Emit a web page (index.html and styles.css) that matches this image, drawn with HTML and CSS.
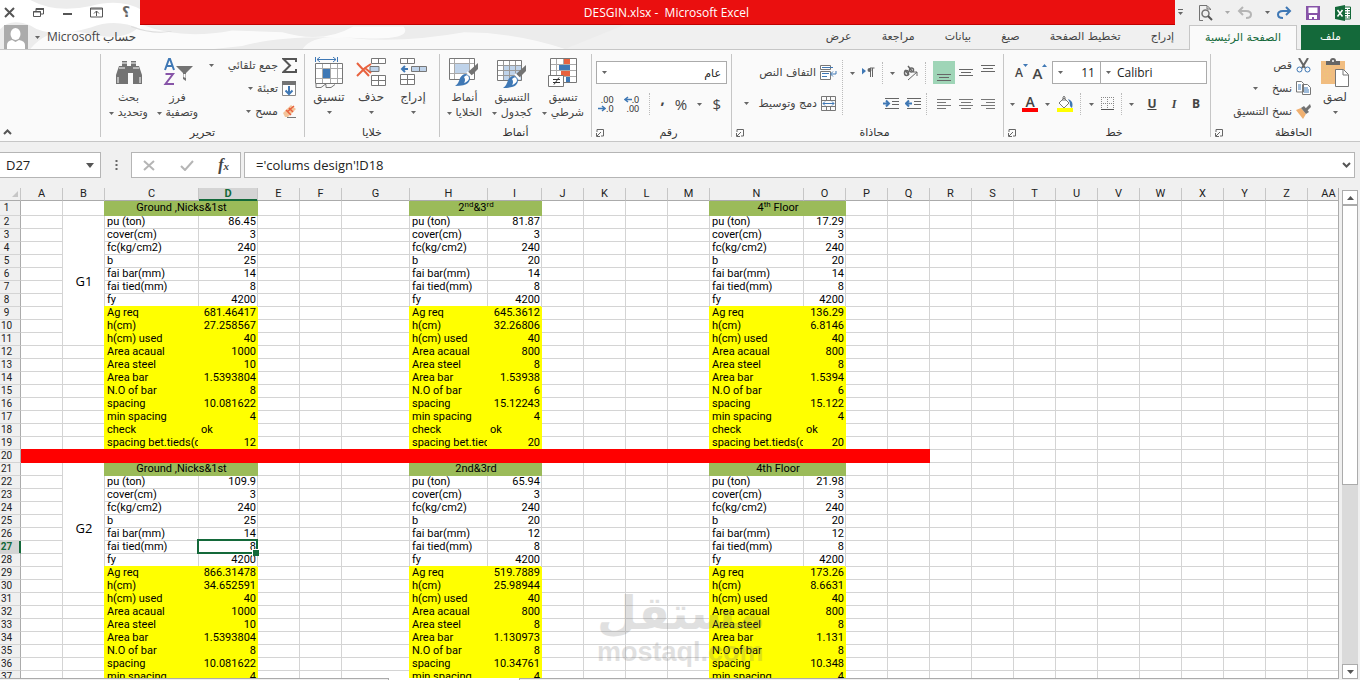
FILE: index.html
```html
<!DOCTYPE html>
<html lang="ar">
<head>
<meta charset="utf-8">
<meta name="viewport" content="width=device-width, initial-scale=1">
<title>DESGIN.xlsx - Microsoft Excel</title>
<link rel="stylesheet" href="styles.css">
</head>
<body>
<svg class="defs" aria-hidden="true">
  <symbol id="caret" viewBox="0 0 5 3"><path d="M0 0h5L2.500 3z" fill="#666"/></symbol>
  <symbol id="launch" viewBox="0 0 8 8"><path d="M1 3V.5h6.500V7H5M5 3 1 7M.5 4v3.500H4" fill="none" stroke="#666"/></symbol>
  <symbol id="brush" viewBox="0 0 24 24"><path d="M23 0v6l-7 7-4-3z" fill="#737373"/><path d="m12 9 5 5" stroke="#fff" stroke-width="2"/><path d="M5 15q4-6 8-3 4 3 0 8-3 3-13 3 4-3 5-8z" fill="#3f78b5"/><path d="M9 14q4-4 5 1 0 3-5 5 2-3 0-6z" fill="#fff"/></symbol>
</svg>
<div class="app">
  <header class="top">
    <svg class="clouds" viewBox="0 0 620 50" preserveAspectRatio="none" aria-hidden="true">
      <path d="M0 0H140V25H620L560 50H0z" fill="#ececec"/>
      <path d="M0 0h30q25 14 60 6 30-8 50 4v20q-25-12-50-2-40 12-60-2Q10 18 0 30z" fill="#fff"/>
      <path d="M30 50q20-25 55-16 40 10 55-9 40 16 90 6l50 2q40 12 70-6h50q10 14-40 12-80-4-120 8-80 10-155 3z" fill="#fff" opacity=".8"/>
      <path d="M300 50q10-16 50-11 50 5 110-6 50 0 100 17z" fill="#fff" opacity=".7"/>
      <path d="M130 27q20 8 40 5" fill="none" stroke="#ddd"/>
    </svg>
    <div class="titlebar">
      <div class="winbtns">
        <button aria-label="إغلاق"><svg width="11" height="11" viewBox="0 0 11 11"><path d="m1 1 9 9M10 1l-9 9" stroke="#555" stroke-width="2"/></svg></button>
        <button aria-label="استعادة"><svg width="11" height="11" viewBox="0 0 11 11" fill="none" stroke="#555"><path d="M3 4V1.500h7.500V7H8"/><path d="M3 2h8" stroke-width="2"/><path d="M.5 4.500h7v5h-7zM0 5h8"/></svg></button>
        <button aria-label="تصغير"><svg width="11" height="11" viewBox="0 0 11 11"><path d="M1 7h9" stroke="#555" stroke-width="2"/></svg></button>
        <button aria-label="خيارات عرض الشريط"><svg width="13" height="11" viewBox="0 0 13 11" fill="none" stroke="#555"><path d="M.5 1h12v9H.5zM0 2h13M6.500 9V4M4 6.500 6.500 4 9 6.500"/></svg></button>
        <button aria-label="تعليمات" class="help">؟</button>
      </div>
      <h1 class="title">DESGIN.xlsx -&nbsp; Microsoft Excel</h1>
      <div class="quick">
        <button class="q1" aria-label="تخصيص"><svg width="5" height="7" viewBox="0 0 5 7"><path d="M0 .5h5" stroke="#666"/><path d="M0 3h5L2.500 6z" fill="#666"/></svg></button>
        <button class="q2" aria-label="معاينة قبل الطباعة"><svg width="15" height="16" viewBox="0 0 15 16" fill="none" stroke="#737373"><path d="M12.500 5V4L9 .5H1.500v15H5M9 1v3h3"/><circle cx="7.500" cy="8.500" r="3.500" stroke-width="1.500"/><path d="m10 11 4 4" stroke="#555" stroke-width="2"/></svg></button>
        <button class="q3" aria-label="قائمة التراجع"><svg class="caret faint"><use href="#caret"/></svg></button>
        <button class="q4" aria-label="تراجع"><svg width="15" height="13" viewBox="0 0 15 13" fill="none" stroke="#b5b5b5" stroke-width="2"><path d="M6 1 2 5l4 4M2 5h7q5 0 5 3.500T9 12"/></svg></button>
        <button class="q5" aria-label="قائمة الإعادة"><svg class="caret"><use href="#caret"/></svg></button>
        <button class="q6" aria-label="إعادة"><svg width="15" height="13" viewBox="0 0 15 13" fill="none" stroke="#3f78b5" stroke-width="2"><path d="m9 1 4 4-4 4M13 5H6Q1 5 1 8.500T6 12"/></svg></button>
        <button class="q7" aria-label="حفظ"><svg width="14" height="14" viewBox="0 0 14 14"><path d="M0 0h14v14H0z" fill="#8754a8"/><path d="M2.500 1.500h9V7h-9zM3 9h8v4H8v-2H6v2H3z" fill="#fff"/></svg></button>
        <span class="q8"><svg width="16" height="16" viewBox="0 0 16 16"><path d="M9 2h6.500v12H9" fill="#fff" stroke="#14693a"/><path d="M10 4.500h2m1 0h2M10 7h2m1 0h2m-5 2.500h2m1 0h2M10 12h2m1 0h2" stroke="#14693a"/><path d="m0 2 10-2v16L0 14z" fill="#14693a"/><path d="m2.500 5 5 6.500M7.500 5l-5 6.500" stroke="#fff" stroke-width="1.500"/></svg></span>
      </div>
    </div>
    <div class="tabrow">
      <button class="account"><svg width="24" height="24" viewBox="0 0 24 24"><path d="M0 0h24v24H0z" fill="#ababab"/><ellipse cx="11.500" cy="9" rx="5" ry="6" fill="#fff"/><path d="M3 24v-4q0-4 5-5l3.500 2 3.500-2q6 1 6 5v4z" fill="#fff"/></svg><svg class="caret"><use href="#caret"/></svg><span dir="ltr">Microsoft حساب</span></button>
      <nav class="tabs">
        <a href="#view">عرض</a><a href="#review">مراجعة</a><a href="#data">بيانات</a><a href="#formulas">صيغ</a><a href="#layout">تخطيط الصفحة</a><a href="#insert">إدراج</a><a href="#home" class="active">الصفحة الرئيسية</a><a href="#file" class="file">ملف</a>
      </nav>
    </div>
  </header>

  <section class="ribbon">
    <div class="spacer"><button aria-label="طي الشريط"><svg width="9" height="6" viewBox="0 0 9 6"><path d="m1 5 3.500-3.500L8 5" fill="none" stroke="#555" stroke-width="2"/></svg></button></div>

    <div class="group g-edit">
      <div class="body">
        <button class="big"><svg width="28" height="32" viewBox="0 0 28 32"><path d="M4 9h3V4h5v5h4V4h5v5h3l3 9v9h-9V16h-5v11H1v-9z" fill="#737373"/><path d="M7 6h5M16 6h5M4 11h6m8 0h6M3 20v6m22-6v6" stroke="#fff"/></svg><span>بحث</span><span>وتحديد <svg class="caret"><use href="#caret"/></svg></span></button>
        <button class="big"><svg width="30" height="32" viewBox="0 0 30 32" fill="none"><path d="m2 13 4-11h1l4 11M3.500 9h6" stroke="#3f78b5" stroke-width="2"/><path d="M2.500 17H10L2.500 27H11" stroke="#8754a8" stroke-width="2"/><path d="M13 9h17l-7 7v8l-3-2v-6z" fill="#737373"/><path d="M20.500 17h2v4l-2-1z" fill="#fff"/></svg><span>فرز</span><span>وتصفية <svg class="caret"><use href="#caret"/></svg></span></button>
        <div class="smalls">
          <button><svg width="15" height="15" viewBox="0 0 15 15"><path d="M14 4V1H1.500L8 7.500 1.500 14H14v-3" fill="none" stroke="#555" stroke-width="2"/></svg>جمع تلقائي<svg class="caret far"><use href="#caret"/></svg></button>
          <button><svg width="15" height="15" viewBox="0 0 15 15"><path d="M.5.5h13v14H.5z" fill="#fff" stroke="#888"/><path d="M0 0h14v4H0z" fill="#737373"/><path d="M7 5v8M3.500 9.500 7 13l3.500-3.500" fill="none" stroke="#3f78b5" stroke-width="2"/></svg>تعبئة<svg class="caret"><use href="#caret"/></svg></button>
          <button><svg width="15" height="15" viewBox="0 0 15 15"><path d="m1 9 8-8 5 4-8 8H3z" fill="#f3c49a"/><path d="m4 6 5 5M7 4l4 4M5 8l7-6" stroke="#e8623f" stroke-width="1.500"/><path d="M5 13.500h9" stroke="#777"/></svg>مسح<svg class="caret"><use href="#caret"/></svg></button>
        </div>
      </div>
      <div class="label">تحرير</div>
    </div>

    <div class="group g-cells">
      <div class="body">
        <button class="big"><svg width="28" height="32" viewBox="0 0 28 32" fill="none"><path d="M.5 0v5M22.500 0v5M2 2.500h19M5 0 2 2.500 5 5M18 0l3 2.500L18 5" stroke="#3f78b5"/><path d="M.5 6.500h27v20H.5z" fill="#fff" stroke="#777"/><path d="M7.500 7v19m8-19v19m7-19v19M1 11.500h26m-26 10h26" stroke="#aaa"/><path d="M8 12h7v9H8z" fill="#3f78b5"/><path d="M1 27v3.500h5l4-3h1v3h5l4-3" stroke="#777"/></svg><span>تنسيق</span><svg class="caret"><use href="#caret"/></svg></button>
        <button class="big"><svg width="30" height="32" viewBox="0 0 30 32" fill="none"><g stroke="#777"><path d="M15.500 1.500h14v5h-14zm7 0v5" fill="#fff"/><path d="M14 9.500h9v5h-9z" fill="#bfd3ea"/><path d="M15.500 18.500h14v10h-14zm7 0v10m-7-5h14" fill="#fff"/></g><path d="m1 6 12 13M1 19l8-8 6-4m-6 4 6 5" stroke="#e8623f" stroke-width="2"/></svg><span>حذف</span><svg class="caret"><use href="#caret"/></svg></button>
        <button class="big"><svg width="28" height="32" viewBox="0 0 28 32" fill="none"><g stroke="#777"><path d="M1.500 1.500h14v5h-14zm7 0v5" fill="#fff"/><path d="M12.500 9.500h15v5h-15zm8 0v5" fill="#bfd3ea"/><path d="M1.500 17.500h14v10h-14zm7 0v10m-7-5h14" fill="#fff"/></g><path d="M9 12H3m3-3-3 3 3 3" stroke="#3f78b5" stroke-width="2"/></svg><span>إدراج</span><svg class="caret"><use href="#caret"/></svg></button>
      </div>
      <div class="label">خلايا</div>
    </div>

    <div class="group g-styles">
      <div class="body">
        <button class="big"><svg width="30" height="32" viewBox="0 0 30 32" fill="none"><path d="M.5 1.500h25v21H.5z" fill="#fff" stroke="#777"/><path d="M5.500 2v20m15-20v20M1 6.500h24m-24 10h24" stroke="#aaa"/><path d="M6 7h14v9H6z" fill="#bfd3ea"/><use href="#brush" x="6" y="6" width="24" height="24"/></svg><span>أنماط</span><span>الخلايا <svg class="caret"><use href="#caret"/></svg></span></button>
        <button class="big"><svg width="30" height="32" viewBox="0 0 30 32" fill="none"><path d="M.5 3.500h24v20H.5z" fill="#fff" stroke="#777"/><path d="M7 9h17v14H7z" fill="#bfd3ea"/><path d="M6.500 4v19m6-19v19m6-19v19M1 8.500h23m-23 5h23m-23 5h23" stroke="#999"/><use href="#brush" x="6" y="8" width="24" height="24"/></svg><span>التنسيق</span><span>كجدول <svg class="caret"><use href="#caret"/></svg></span></button>
        <button class="big"><svg width="32" height="32" viewBox="0 0 32 32" fill="none"><path d="M3.500 1.500h26v24h-26z" fill="#fff" stroke="#777"/><path d="M9.500 2v23m7-23v23m6-23v23M4 7.500h25m-25 6h25m-25 6h25" stroke="#aaa"/><path d="M17 2h6v5h-6zm-3 12h9v5h-9z" fill="#e8623f"/><path d="M12 8h11v5H12zm7 12h4v5h-4z" fill="#3f78b5"/><path d="M1.500 18.500h15v11h-15z" fill="#fff" stroke="#777"/><path d="M6 22.500h7m-7 3h7m-1-5-5 7" stroke="#333"/></svg><span>تنسيق</span><span>شرطي <svg class="caret"><use href="#caret"/></svg></span></button>
      </div>
      <div class="label">أنماط</div>
    </div>

    <div class="group g-number">
      <div class="body rows">
        <div class="combo full"><svg class="caret"><use href="#caret"/></svg><select aria-label="تنسيق الأرقام" dir="rtl"><option>عام</option></select></div>
        <div class="line">
          <button class="dec" aria-label="إنقاص المنازل العشرية"><span>.00</span><span><svg width="8" height="7" viewBox="0 0 8 7"><path d="M0 3.500h7M4 1l3 2.500L4 6" fill="none" stroke="#3f78b5" stroke-width="1.500"/></svg>.0</span></button>
          <button class="dec" aria-label="زيادة المنازل العشرية"><span><svg width="8" height="7" viewBox="0 0 8 7"><path d="M8 3.500H1M4 1 1 3.500 4 6" fill="none" stroke="#3f78b5" stroke-width="1.500"/></svg>.0</span><span>.00</span></button>
          <i class="dots"></i>
          <button class="sym comma" aria-label="نمط الفاصلة">,</button>
          <button class="sym">%</button>
          <button aria-label="عملات"><svg class="caret"><use href="#caret"/></svg></button>
          <button class="sym">$</button>
        </div>
      </div>
      <div class="label">رقم</div>
      <button class="launcher" aria-label="خيارات الأرقام"><svg width="8" height="8"><use href="#launch"/></svg></button>
    </div>

    <div class="group g-align">
      <div class="body">
        <div class="wrapcol">
          <button><svg width="17" height="16" viewBox="0 0 17 16" fill="none"><path d="M.5.5h10v4H.5zm0 6h10v8H.5z" fill="#fff" stroke="#777"/><path d="M2 2.500h11M2 8.500h7m-7 3h5M16 6v3h-5m2-2.500L10.500 9l2.500 2.500" stroke="#3f78b5"/></svg>التفاف النص</button>
          <button><svg width="16" height="16" viewBox="0 0 16 16" fill="none"><path d="M.5.5h14v14H.5zM1 4.500h13m-13 6h13M5.500 0v4m4-4v4m-4 7v4m4-4v4" stroke="#777"/><path d="M2 7.500h11M4 5.500l-2 2 2 2m7-4 2 2-2 2" stroke="#3f78b5"/></svg>دمج وتوسيط<svg class="caret merge"><use href="#caret"/></svg></button>
        </div>
        <i class="dots tall"></i>
        <div class="rows aligns">
          <div class="line">
            <button aria-label="قائمة الاتجاه"><svg class="caret"><use href="#caret"/></svg></button>
            <button aria-label="اتجاه النص"><svg width="13" height="11" viewBox="0 0 13 11"><path d="m0 1 4 3-4 3.500z" fill="#3f78b5"/><path d="M8.500 1v9M10.500 1v9M12.500 1H8" stroke="#666" fill="none"/><circle cx="7.500" cy="3" r="2" fill="#666"/></svg></button>
            <i class="dots"></i>
            <button aria-label="قائمة التدوير"><svg class="caret"><use href="#caret"/></svg></button>
            <button aria-label="تدوير النص"><svg width="16" height="16" viewBox="0 0 16 16" fill="none" stroke="#666"><ellipse cx="4.500" cy="8" rx="2" ry="2.500" stroke-width="1.500"/><path d="m3 5 4 5M6 1l4 5" stroke-width="1.500"/><circle cx="9.500" cy="5" r="2" stroke-width="1.500"/><path d="M6 15 15 7m-4 0h4v4"/></svg></button>
            <i class="dots"></i>
            <div class="set">
              <button class="al on" aria-label="محاذاة للأسفل"><svg width="14" height="20" viewBox="0 0 14 20"><path d="M0 11.500h14m-12 3h10m-12 3h14" stroke="#666"/></svg></button>
              <button class="al" aria-label="محاذاة للوسط"><svg width="14" height="20" viewBox="0 0 14 20"><path d="M0 6.500h14m-12 3h10m-12 3h14" stroke="#666"/></svg></button>
              <button class="al" aria-label="محاذاة للأعلى"><svg width="14" height="20" viewBox="0 0 14 20"><path d="M0 2.500h14m-12 3h10m-12 3h14" stroke="#666"/></svg></button>
            </div>
          </div>
          <div class="line">
            <button aria-label="زيادة المسافة البادئة"><svg width="16" height="12" viewBox="0 0 16 12" fill="none"><path d="M2 .5h14M9 3.500h7m-7 3h7m-14 4h14" stroke="#666"/><path d="M0 5.500h6M3 2.500l3 3-3 3" stroke="#3f78b5" stroke-width="2"/></svg></button>
            <button aria-label="إنقاص المسافة البادئة"><svg width="16" height="12" viewBox="0 0 16 12" fill="none"><path d="M2 .5h14M9 3.500h7m-7 3h7m-14 4h14" stroke="#666"/><path d="M7 5.500H1M4 2.500l-3 3 3 3" stroke="#3f78b5" stroke-width="2"/></svg></button>
            <i class="dots"></i>
            <div class="set">
              <button class="al" aria-label="محاذاة لليسار"><svg width="14" height="12" viewBox="0 0 14 12"><path d="M0 1.500h14m-14 3h9m-9 3h14m-14 3h9" stroke="#777"/></svg></button>
              <button class="al" aria-label="توسيط"><svg width="14" height="12" viewBox="0 0 14 12"><path d="M0 1.500h14m-12 3h10m-12 3h14m-12 3h10" stroke="#777"/></svg></button>
              <button class="al" aria-label="محاذاة لليمين"><svg width="14" height="12" viewBox="0 0 14 12"><path d="M0 1.500h14m-9 3h9m-14 3h14m-9 3h9" stroke="#777"/></svg></button>
            </div>
          </div>
        </div>
      </div>
      <div class="label">محاذاة</div>
      <button class="launcher" aria-label="خيارات المحاذاة"><svg width="8" height="8"><use href="#launch"/></svg></button>
    </div>

    <div class="group g-font">
      <div class="body rows">
        <div class="line">
          <button class="fa small" aria-label="تصغير الخط">A<svg width="5" height="3" viewBox="0 0 5 3"><path d="M0 0h5L2.500 3z" fill="#3f78b5"/></svg></button>
          <button class="fa" aria-label="تكبير الخط">A<svg width="5" height="3" viewBox="0 0 5 3"><path d="M0 3h5L2.500 0z" fill="#3f78b5"/></svg></button>
          <div class="combos">
            <div class="combo size"><svg class="caret"><use href="#caret"/></svg><select aria-label="حجم الخط"><option>11</option></select></div>
            <div class="combo name"><svg class="caret"><use href="#caret"/></svg><select aria-label="الخط"><option>Calibri</option></select></div>
          </div>
        </div>
        <div class="line">
          <button aria-label="ألوان الخط"><svg class="caret"><use href="#caret"/></svg></button>
          <button class="color" aria-label="لون الخط">A</button>
          <button aria-label="ألوان التعبئة"><svg class="caret"><use href="#caret"/></svg></button>
          <button aria-label="لون التعبئة"><svg width="16" height="16" viewBox="0 0 16 16" fill="none"><path d="m2 7 5-5 5 5-5 5z" fill="#fff" stroke="#777"/><path d="M6 5V1q1-1.500 2 0v4" stroke="#777"/><path d="M11 3q6 2 4 9-3-2-2-5z" fill="#3f78b5"/><path d="M0 12h16v4H0z" fill="#ff0"/></svg></button>
          <i class="dots"></i>
          <button aria-label="قائمة الحدود"><svg class="caret"><use href="#caret"/></svg></button>
          <button aria-label="حدود"><svg width="13" height="13" viewBox="0 0 13 13"><path d="M.5 0v12M12.500 0v12M6.500 0v12M0 .5h13M0 6.500h13" stroke="#888" stroke-dasharray="1 1"/><path d="M0 12.500h13" stroke="#555"/></svg></button>
          <i class="dots"></i>
          <button aria-label="أنماط التسطير"><svg class="caret"><use href="#caret"/></svg></button>
          <div class="set">
            <button class="fmt u">U</button>
            <button class="fmt i">I</button>
            <button class="fmt">B</button>
          </div>
        </div>
      </div>
      <div class="label">خط</div>
      <button class="launcher" aria-label="خيارات الخط"><svg width="8" height="8"><use href="#launch"/></svg></button>
    </div>

    <div class="group g-clip">
      <div class="body">
        <div class="smalls">
          <button><svg width="15" height="15" viewBox="0 0 15 15" fill="none"><path d="m3 0 6 10M12 0 6 10" stroke="#666" stroke-width="2"/><circle cx="3.500" cy="11.500" r="2.500" stroke="#3f78b5"/><circle cx="11.500" cy="11.500" r="2.500" stroke="#3f78b5"/></svg>قص</button>
          <button><svg width="15" height="15" viewBox="0 0 15 15"><path d="M.5.5h5l2 2V11h-7zM6.500 3.500h5l3 3v7h-8z" fill="#fff" stroke="#777"/><path d="M2 4h3M2 6h3M2 8h3m3-1h4M8 9h5m-5 2h5" stroke="#3f78b5"/></svg>نسخ<svg class="caret far"><use href="#caret"/></svg></button>
          <button><svg width="15" height="15" viewBox="0 0 15 15"><path d="m0 6 5-2 5 6-3 5z" fill="#f0b070"/><path d="m5 4 3-2 5 6-3 2z" fill="#737373"/><path d="m9 5 5-5 1 3-4 4z" fill="#737373"/></svg>نسخ التنسيق</button>
        </div>
        <button class="big paste"><svg width="28" height="32" viewBox="0 0 28 32"><path d="M0 4h24v23H0z" fill="#f1bd80"/><path d="M3 9h9m-9 4h9m-9 4h9m-9 4h9" stroke="#e8d070" stroke-dasharray="1 2"/><path d="M5 8V4h4q0-3 3-3t3 3h4v4z" fill="#666"/><circle cx="12" cy="4" r="1" fill="#fff"/><path d="M14.500 12.500h8l5 5v12h-13z" fill="#fff" stroke="#777"/><path d="M22 13v5h5" fill="none" stroke="#777"/></svg><span>لصق</span><svg class="caret"><use href="#caret"/></svg></button>
      </div>
      <div class="label">الحافظة</div>
      <button class="launcher" aria-label="خيارات الحافظة"><svg width="8" height="8"><use href="#launch"/></svg></button>
    </div>
  </section>

  <section class="formula" dir="ltr">
    <div class="namebox"><input aria-label="مربع الاسم" value="D27"><svg width="8" height="5" viewBox="0 0 8 5"><path d="M0 0h8L4 5z" fill="#555"/></svg></div>
    <svg width="3" height="11" viewBox="0 0 3 11"><path d="M.5 0h2v2h-2zm0 4h2v2h-2zm0 4h2v2h-2z" fill="#666"/></svg>
    <div class="fxbox">
      <button aria-label="إلغاء"><svg width="12" height="11" viewBox="0 0 12 11"><path d="m1 1 10 9M11 1 1 10" stroke="#b5b5b5" stroke-width="2"/></svg></button>
      <button aria-label="إدخال"><svg width="14" height="11" viewBox="0 0 14 11"><path d="m1 6 4 4 8-9" fill="none" stroke="#b5b5b5" stroke-width="2"/></svg></button>
      <button class="fx"><i>f</i>x</button>
    </div>
    <div class="fbar"><input aria-label="شريط الصيغة" value="='colums design'!D18"><svg width="9" height="6" viewBox="0 0 9 6"><path d="m1 1 3.500 3.500L8 1" fill="none" stroke="#555" stroke-width="2"/></svg></div>
  </section>

  <main class="work">
    <div class="sheetwrap">
      <div class="sheet"><table id="grid" class="grid"></table></div>
      <div class="mark" aria-hidden="true"><span class="mark-ar">مستقل</span><span class="mark-en">mostaql.com</span></div>
      <div class="foot"><i class="foot-a"></i><i class="foot-tab"></i><i class="foot-b"></i></div>
    </div>
    <div class="scroll">
      <button aria-label="لأعلى"><svg width="7" height="4" viewBox="0 0 7 4"><path d="M0 4h7L3.500 0z" fill="#555"/></svg></button>
      <div class="track"><div class="thumb"></div></div>
      <button aria-label="لأسفل"><svg width="7" height="4" viewBox="0 0 7 4"><path d="M0 0h7L3.500 4z" fill="#555"/></svg></button>
    </div>
  </main>
</div>
<script src="grid.js"></script>
</body>
</html>
```
FILE: styles.css
```css
* { box-sizing: border-box; }
body { margin: 0; background: #f0f0f0; color: #444; font: 11px/15px "DejaVu Sans", sans-serif; }
button { margin: 0; padding: 0; border: 0; background: none; color: inherit; font: inherit; }
select, input { min-width: 0; margin: 0; padding: 0; border: 0; background: none; color: #222; font: 12px/20px "Open Sans", "DejaVu Sans", sans-serif; appearance: none; outline: 0; }
svg { display: block; flex: none; }
.defs { position: absolute; width: 0; height: 0; }
.caret { display: inline-block; width: 5px; height: 3px; vertical-align: middle; }
.faint { opacity: .5; }
.app { display: flex; flex-direction: column; height: 100vh; overflow: hidden; }

.top { position: relative; border-bottom: 1px solid #c6c6c6; }
.clouds { position: absolute; left: 0; top: 0; width: 46%; height: 100%; }
.titlebar { position: relative; display: flex; height: 25px; }
.winbtns { display: flex; width: 140px; padding-left: 3px; gap: 17px; align-items: center; }
.winbtns button { display: grid; place-items: center; min-width: 12px; height: 22px; }
.winbtns .help { font-weight: bold; font-size: 14px; color: #666; }
.title { flex: 1; margin: 0; padding-left: 18px; background: #ea0f0f; border-bottom: 1px solid #c00000; color: #fff; font: 12px/25px "Open Sans", sans-serif; text-align: center; }
.quick { display: flex; align-items: center; width: 185px; }
.quick > * { display: grid; place-items: center; height: 22px; }
.q1 { width: 11px; } .q2 { width: 38px; } .q3 { width: 7px; } .q4 { width: 26px; } .q5 { width: 20px; } .q6 { width: 14px; } .q7 { width: 44px; } .q8 { width: 14px; }

.tabrow { position: relative; display: flex; justify-content: space-between; height: 24px; }
.account { display: flex; align-items: center; gap: 7px; padding-left: 4px; font: 12px/24px "Open Sans", "DejaVu Sans", sans-serif; }
.tabs { display: flex; }
.tabs a { padding: 0 15px; color: #444; text-decoration: none; line-height: 24px; }
.tabs .active { height: 25px; margin-right: 4px; border: 1px solid #c6c6c6; border-bottom: 0; background: #fafafa; color: #14693a; }
.tabs .file { width: 59px; padding: 0; height: 25px; background: #14693a; color: #fff; text-align: center; }

.ribbon { display: flex; height: 92px; padding: 4px 0; background: #fafafa; border-bottom: 1px solid #c6c6c6; }
.spacer { display: flex; flex: 1; align-items: flex-end; padding: 0 0 2px 3px; }
.group { position: relative; display: flex; flex-direction: column; border-left: 1px solid #c6c6c6; }
.body { display: flex; flex: 1; }
.label { margin-bottom: -2px; line-height: 12px; color: #333; text-align: center; }
.launcher { position: absolute; left: 4px; bottom: 0; }
.big { display: flex; flex-direction: column; align-items: center; padding-top: 3px; font-size: 12px; white-space: nowrap; }
.big > svg:first-child { margin-bottom: 1px; }
.big > span { direction: rtl; }
.big > .caret { margin-top: 6px; }
.smalls { display: flex; flex-direction: column; flex: 1; direction: rtl; }
.smalls button, .wrapcol button { display: flex; align-items: center; gap: 4px; height: 23px; white-space: nowrap; }
.far { margin-right: 10px; }
.g-edit { width: 204px; }
.g-edit .body { padding: 0 7px 0 3px; }
.g-edit .big { width: 49px; }
.g-edit .big, .g-styles .big { font-size: 11px; }
.g-cells { width: 135px; }
.g-cells .body { padding-left: 3px; }
.g-cells .big { width: 42px; }
.g-styles { width: 152px; }
.g-styles .body { justify-content: space-between; padding: 0 7px; }
.g-number { width: 140px; }
.g-number .label { padding-left: 14px; }
.g-align { width: 272px; }
.g-align .label { padding-left: 14px; }
.g-font { width: 207px; }
.g-font .label { padding-left: 14px; }
.g-clip { width: 150px; }
.g-clip .label { padding-left: 16px; }
.g-clip .body { padding-right: 5px; }
.paste { width: 40px; margin-left: 4px; }

.rows { display: flex; flex-direction: column; gap: 8px; }
.body.rows { padding: 7px 4px 0; }
.line { display: flex; align-items: center; justify-content: space-between; height: 23px; }
.dots { width: 0; height: 22px; border-left: 1px dotted #bbb; }
.combo { display: flex; align-items: center; height: 23px; padding: 0 5px; border: 1px solid #ababab; background: #fff; }
.combo select { flex: 1; padding-left: 6px; }
.full select { font-size: 11px; }
.combos, .set { display: flex; }
.size { width: 48px; border-right: 0; }
.size select { text-align-last: right; }
.name { width: 107px; }
.dec { display: flex; flex-direction: column; align-items: flex-end; font: 9px/9px "Noto Sans", sans-serif; color: #333; }
.dec span { display: flex; align-items: center; }
.sym { font: 15px/22px "Open Sans", sans-serif; }
.comma { align-self: flex-start; font-weight: bold; line-height: 12px; }
.g-number .line { padding: 0 6px 0 2px; }

.wrapcol { display: flex; flex-direction: column; gap: 8px; width: 105px; padding-top: 7px; direction: rtl; }
.merge { margin-right: 6px; }
.tall { height: 55px; margin: 6px 7px 0 5px; }
.aligns { flex: 1; padding: 7px 4px 0 0; }
.aligns .line:last-child { padding-left: 33px; }
.al { display: grid; place-items: center; width: 22px; height: 23px; }
.on { background: #9fd5b7; }

.fa { display: flex; align-items: flex-start; font: 600 15px/18px "Open Sans", sans-serif; }
.fa.small { font-size: 12px; }
.g-font .line:first-child { padding-left: 7px; }
.g-font .line:last-child { padding-left: 2px; }
.g-font .body { padding-right: 3px; }
.color { width: 16px; border-bottom: 4px solid #f00; font: 600 14px/13px "Open Sans", sans-serif; text-align: center; }
.fmt { width: 22px; font: bold 12px/16px "Open Sans", sans-serif; text-align: center; }
.fmt.u { text-decoration: underline; }
.fmt.i { font-family: "Liberation Serif", serif; font-style: italic; }

.formula { display: flex; align-items: center; height: 46px; padding: 0 5px 0 0; }
.namebox, .fxbox, .fbar { display: flex; align-items: center; height: 26px; border: 1px solid #b5b5b5; background: #fff; }
.namebox { width: 101px; margin-right: 14px; padding: 0 6px; border-left: 0; }
.namebox input { width: 80px; }
.fxbox { width: 110px; margin: 0 3px 0 13px; padding: 0 11px; justify-content: space-between; }
.fx { font: bold 11px/18px "Liberation Serif", serif; font-style: italic; }
.fx i { font-size: 16px; }
.fbar { flex: 1; padding: 0 3px 0 11px; }
.fbar input { flex: 1; }
.namebox input, .fbar input { font: 13px/20px "Open Sans", sans-serif; }

.work { display: flex; flex: 1; min-height: 0; gap: 3px; padding-right: 2px; }
.sheetwrap { position: relative; display: flex; flex: 1; flex-direction: column; min-width: 0; }
.sheet { flex: 1; min-height: 0; overflow: hidden; border-right: 1px solid #ababab; background: #fff; }
.grid { table-layout: fixed; border-spacing: 0; width: 0; color: #000; font: 11px/12px Roboto, sans-serif; }
.grid td, .grid th { height: 13px; padding: 0 2px; overflow: hidden; white-space: nowrap; border-right: 1px solid #d4d4d4; border-bottom: 1px solid #d4d4d4; font-weight: normal; text-align: left; }
.grid td { padding-right: 1px; }
.grid thead th { background: #f0f0f0; border-color: #c6c6c6; border-bottom-color: #ababab; color: #222; text-align: center; }
.grid tbody th { padding: 0 7px 0 0; background: #f0f0f0; border-right-color: #ababab; color: #222; font-size: 10px; text-align: center; }
.grid tbody tr:first-child > * { height: 15px; }
.grid .num { text-align: right; }
.grid .corner { padding: 0 2px; }
.corner svg { margin-left: auto; }
.grid thead .sel, .grid tbody .sel { background: #d4d4d4; color: #14693a; font-weight: bold; }
.grid thead .sel { border-bottom-color: #14693a; box-shadow: inset 0 -1px 0 #14693a; }
.grid tbody .sel { border-right-color: #14693a; box-shadow: inset -1px 0 0 #14693a; }
.grid .yellow { background: #ff0; border-color: #ff0; box-shadow: -1px -1px 0 #ff0; }
.grid .red { background: #f00; border-color: #f00; box-shadow: 0 -1px 0 #f00; }
.grid .green { background: #9bbb59; border-color: #9bbb59; box-shadow: -1px 0 0 #9bbb59; text-align: center; }
.green sup { font-size: 8px; line-height: 0; vertical-align: 4px; }
.grid .merged { font: 13px/16px "Open Sans", sans-serif; text-align: center; }
.grid .current { position: relative; overflow: visible; }
.current::before { content: ""; position: absolute; inset: -2px -1px -1px -2px; border: 2px solid #14693a; }
.current::after { content: ""; position: absolute; right: -2px; bottom: -3px; width: 6px; height: 6px; background: #14693a; border: solid #fff; border-width: 1px 0 0 1px; }
.mark { position: absolute; left: 597px; bottom: 14px; display: flex; flex-direction: column; color: #777; opacity: .22; pointer-events: none; }
.mark-ar { font: bold 46px/50px "DejaVu Sans", sans-serif; }
.mark-en { font: bold 27px/28px "Liberation Sans", sans-serif; }
.foot { display: flex; height: 2px; }
.foot i { border-top: 1px solid #ababab; }
.foot .foot-a { width: 389px; border-right: 1px solid #ababab; }
.foot .foot-tab { width: 130px; border: 0; background: #fff; }
.foot .foot-b { flex: 1; border-left: 1px solid #ababab; }
.scroll { display: flex; flex-direction: column; width: 16px; padding: 2px 0 1px; }
.scroll button { display: grid; place-items: center; height: 15px; border: 1px solid #ababab; background: #fff; }
.track { flex: 1; background: #dadada; }
.thumb { height: 61%; border: 1px solid #ababab; background: #fff; }
```
FILE: grid.js
```js
const columns = [
  ["A", 42], ["B", 42], ["C", 94], ["D", 59], ["E", 42], ["F", 42], ["G", 68], ["H", 78], ["I", 54],
  ["J", 42], ["K", 42], ["L", 42], ["M", 42], ["N", 94], ["O", 42], ["P", 42], ["Q", 42], ["R", 42],
  ["S", 42], ["T", 42], ["U", 42], ["V", 42], ["W", 42], ["X", 42], ["Y", 42], ["Z", 42], ["AA", 42]
];
const labels = ["pu (ton)", "cover(cm)", "fc(kg/cm2)", "b", "fai bar(mm)", "fai tied(mm)", "fy",
  "Ag req", "h(cm)", "h(cm) used", "Area acaual", "Area steel", "Area bar", "N.O of bar",
  "spacing", "min spacing", "check", "spacing bet.tieds(cm)"];
const blocks = [
  { top: 1, col: "C", title: "Ground ,Nicks&amp;1st", values: ["86.45", 3, 240, 25, 14, 8, 4200, "681.46417", "27.258567", 40, 1000, 10, "1.5393804", 8, "10.081622", 4, "ok", 12] },
  { top: 1, col: "H", title: "2<sup>nd</sup>&amp;3<sup>rd</sup>", values: ["81.87", 3, 240, 20, 14, 8, 4200, "645.3612", "32.26806", 40, 800, 8, "1.53938", 6, "15.12243", 4, "ok", 20] },
  { top: 1, col: "N", title: "4<sup>th</sup> Floor", values: ["17.29", 3, 240, 20, 14, 8, 4200, "136.29", "6.8146", 40, 800, 8, "1.5394", 6, "15.122", 4, "ok", 20] },
  { top: 21, col: "C", title: "Ground ,Nicks&amp;1st", values: ["109.9", 3, 240, 25, 14, 8, 4200, "866.31478", "34.652591", 40, 1000, 10, "1.5393804", 8, "10.081622", 4] },
  { top: 21, col: "H", title: "2nd&amp;3rd", values: ["65.94", 3, 240, 20, 12, 8, 4200, "519.7889", "25.98944", 40, 800, 8, "1.130973", 8, "10.34761", 4] },
  { top: 21, col: "N", title: "4th Floor", values: ["21.98", 3, 240, 20, 12, 8, 4200, "173.26", "8.6631", 40, 800, 8, "1.131", 8, "10.348", 4] }
];

const cells = {};
const put = (col, row, cell) => { cells[col + row] = cell; };
for (const block of blocks) {
  const next = columns[columns.findIndex(c => c[0] === block.col) + 1][0];
  put(block.col, block.top, { html: block.title, cls: "green", span: 'colspan="2"' });
  put(next, block.top, { skip: true });
  block.values.forEach((value, i) => {
    const fill = i > 6 ? " yellow" : "";
    const row = block.top + 1 + i;
    put(block.col, row, { html: labels[i], cls: fill });
    put(next, row, { html: value, cls: (value === "ok" ? "" : "num") + fill });
  });
}
for (const [top, name] of [[2, "G1"], [21, "G2"]]) {
  put("B", top, { html: name, cls: "merged", span: 'rowspan="10"' });
  for (let r = top + 1; r < top + 10; r++) put("B", r, { skip: true });
}
columns.slice(0, 17).forEach(([name]) => put(name, 20, { html: "", cls: "red" }));
cells.D27.cls += " current";

let html = '<colgroup><col style="width:21px">' + columns.map(c => `<col style="width:${c[1]}px">`).join("") + "</colgroup>";
html += '<thead><tr><th class="corner"><svg width="6" height="6" viewBox="0 0 6 6"><path d="M6 0v6H0z" fill="#c6c6c6"/></svg></th>';
html += columns.map(([name]) => `<th${name === "D" ? ' class="sel"' : ""}>${name}</th>`).join("") + "</tr></thead><tbody>";
for (let r = 1; r <= 37; r++) {
  html += `<tr><th${r === 27 ? ' class="sel"' : ""}>${r}</th>`;
  for (const [name] of columns) {
    const cell = cells[name + r] || { html: "", cls: "" };
    if (!cell.skip) html += `<td class="${cell.cls.trim()}" ${cell.span || ""}>${cell.html}</td>`;
  }
  html += "</tr>";
}
document.getElementById("grid").innerHTML = html + "</tbody>";
```
